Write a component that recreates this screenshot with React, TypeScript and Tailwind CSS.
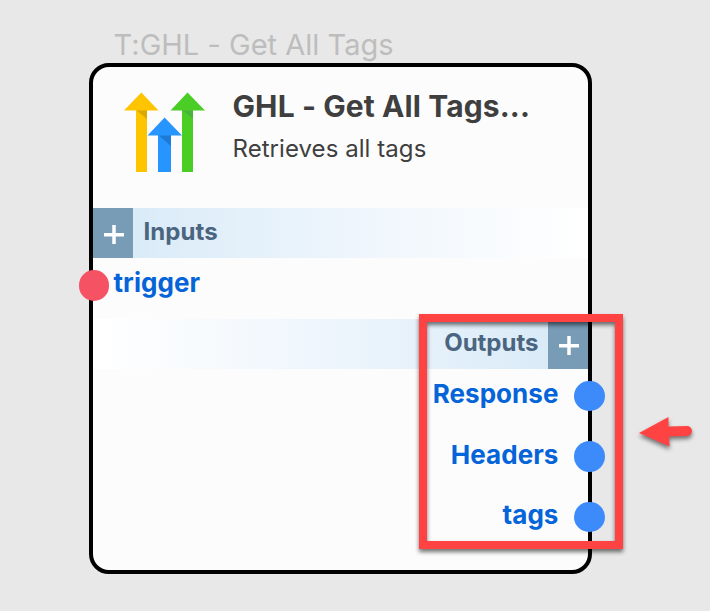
function Logo() {
  return (
    <svg className="ml-[30px] mt-[24px] h-[82px] w-[84px] shrink-0" viewBox="123 91 84 82">
      <path d="M136 110h11v62h-11z" fill="#ffc400" />
      <path d="M182 110h11v62h-11z" fill="#4ace25" />
      <path d="M158 134h13v38h-13z" fill="#2795ff" />
      <path d="M136 110h11v9z" fill="#dba800" />
      <path d="M182 110h11v9z" fill="#48b43e" />
      <path d="M158 135h13v11z" fill="#1d7bd6" />
      <path d="M141.300 92.500L158.500 110.500H124z" fill="#ffc400" />
      <path d="M187.500 92.500L205 110.500H170.500z" fill="#4ace25" />
      <path d="M164.600 117.500L182 135.500H147.500z" fill="#2795ff" />
    </svg>
  );
}

function Plus() {
  return (
    <svg className="h-5 w-5" viewBox="0 0 20 20" stroke="white" strokeWidth="3.500">
      <path d="M0 9.750H20M10 0V19" />
    </svg>
  );
}

function Output({ label }: { label: string }) {
  return (
    <div className="relative flex h-[60.700px] items-start justify-end pr-[29.500px]">
      <span className="text-[26px] font-bold leading-[34px] tracking-[0.060px] text-[#0464d8]">{label}</span>
      <span className="absolute -right-[16.500px] top-[3.500px] h-[30.500px] w-[30.500px] rounded-full bg-[#3d8bfa]" />
    </div>
  );
}

export default function App() {
  return (
    <main className="relative h-[611px] w-[710px] overflow-hidden bg-[#e8e8e8] pl-[89px] pt-[27px] font-['Inter','Liberation_Sans',sans-serif]">
      <h1 className="h-9 whitespace-nowrap pl-[24.500px] text-[29px] font-normal leading-9 tracking-[0.020px] text-[#bdbdbd]">T:GHL - Get All Tags</h1>
      <section className="h-[511px] w-[503px] rounded-[20px] border-4 border-black bg-[#fcfcfc]">
        <header className="flex h-[141px] items-start">
          <Logo />
          <div className="ml-[25.500px] mt-[19px] whitespace-nowrap text-[#3f3f3f]">
            <h2 className="text-[30px] font-bold leading-10 tracking-[0.100px]">GHL - Get All Tags...</h2>
            <p className="mt-[7px] text-[24px] leading-8 tracking-[0.060px]">Retrieves all tags</p>
          </div>
        </header>
        <div className="flex h-[50px] bg-linear-to-r from-[#d6e9f7] via-[#edf5fc] to-white">
          <div className="flex w-10 items-center justify-center bg-[#789bb6] pl-px pt-[3px]"><Plus /></div>
          <span className="ml-[10.500px] mt-[8px] text-[24px] font-bold leading-8 tracking-[0.060px] text-[#4b6580]">Inputs</span>
        </div>
        <div className="relative h-[61px] pl-[20.500px] pt-2">
          <span className="absolute -left-[14.500px] top-[12px] h-[30.500px] w-[30.500px] rounded-full bg-[#f55264]" />
          <span className="text-[26px] font-bold leading-[34px] tracking-[0.060px] text-[#0464d8]">trigger</span>
        </div>
        <div className="flex h-[50px] justify-end bg-linear-to-l from-[#d6e9f7] via-[#edf5fc] to-white">
          <span className="mr-[9.500px] mt-[8px] text-[24px] font-bold leading-8 text-[#4b6580]">Outputs</span>
          <div className="flex w-10 items-center justify-center bg-[#789bb6] pl-px pt-[3px]"><Plus /></div>
        </div>
        <div className="pt-[8px]">
          <Output label="Response" />
          <Output label="Headers" />
          <Output label="tags" />
        </div>
      </section>
      <div className="absolute left-[419px] top-[314px] h-[235px] w-[204px] border-8 border-[#ff4343] [filter:drop-shadow(0_3px_2px_rgba(0,0,0,0.55))]" />
      <svg className="absolute left-[630px] top-[405px] h-[60px] w-[75px] [filter:drop-shadow(0_3px_2px_rgba(0,0,0,0.5))]" viewBox="630 405 75 60">
        <path d="M639 433L668.500 417V426.500L687 426A5 5 0 0 1 687 436L669 436.500L669.500 446.500Z" fill="#ff4343" />
      </svg>
    </main>
  );
}
